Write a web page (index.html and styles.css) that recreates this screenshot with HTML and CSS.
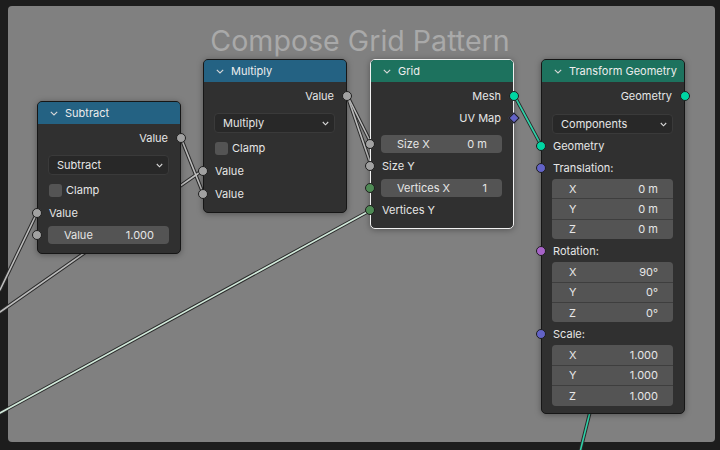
FILE: index.html
```html
<!DOCTYPE html>
<html>
<head>
<meta charset="utf-8">
<link rel="stylesheet" href="styles.css">
</head>
<body>
<div class="stage">
  <div class="frame">
    <div class="frame-title">Compose Grid Pattern</div>
  </div>

  <svg class="wires" width="720" height="450" viewBox="0 0 720 450">
    <g class="w-out">
      <line x1="181" y1="138" x2="203" y2="193"/>
      <line x1="0" y1="312" x2="203" y2="170"/>
      <line x1="37" y1="213" x2="0" y2="290"/>
      <line x1="347" y1="95" x2="371" y2="143"/>
      <line x1="347" y1="95" x2="371" y2="165"/>
      <line x1="371" y1="210" x2="0" y2="413"/>
      <line x1="514" y1="95" x2="541" y2="145"/>
      <line x1="593" y1="400" x2="580" y2="452"/>
    </g>
    <g class="w-gray">
      <line x1="181" y1="138" x2="203" y2="193"/>
      <line x1="0" y1="312" x2="203" y2="170"/>
      <line x1="37" y1="213" x2="0" y2="290"/>
      <line x1="347" y1="95" x2="371" y2="143"/>
      <line x1="347" y1="95" x2="371" y2="165"/>
    </g>
    <g class="w-mint">
      <line x1="371" y1="210" x2="0" y2="413"/>
    </g>
    <g class="w-teal">
      <line x1="514" y1="95" x2="541" y2="145"/>
      <line x1="593" y1="400" x2="580" y2="452"/>
    </g>
  </svg>

  <!-- Subtract -->
  <div class="node n-sub">
    <div class="head head-conv">
      <svg class="chev" width="8" height="5" viewBox="0 0 8 5"><polyline points="0.8,0.8 4,4 7.2,0.8"/></svg>
      <span>Subtract</span>
    </div>
    <div class="body">
      <div class="row out"><span>Value</span><i class="sock s-gray sock-r"></i></div>
      <div class="dd"><span>Subtract</span><svg class="dchev" width="7" height="5" viewBox="0 0 7 5"><polyline points="0.8,1 3.5,3.8 6.2,1"/></svg></div>
      <div class="row"><i class="check"></i><span>Clamp</span></div>
      <div class="row in"><i class="sock s-gray sock-l"></i><span>Value</span></div>
      <div class="row"><i class="sock s-gray sock-l"></i><div class="field"><span>Value</span><span>1.000</span></div></div>
    </div>
  </div>

  <!-- Multiply -->
  <div class="node n-mul">
    <div class="head head-conv">
      <svg class="chev" width="8" height="5" viewBox="0 0 8 5"><polyline points="0.8,0.8 4,4 7.2,0.8"/></svg>
      <span>Multiply</span>
    </div>
    <div class="body">
      <div class="row out"><span>Value</span><i class="sock s-gray sock-r"></i></div>
      <div class="dd"><span>Multiply</span><svg class="dchev" width="7" height="5" viewBox="0 0 7 5"><polyline points="0.8,1 3.5,3.8 6.2,1"/></svg></div>
      <div class="row"><i class="check"></i><span>Clamp</span></div>
      <div class="row in"><i class="sock s-gray sock-l"></i><span>Value</span></div>
      <div class="row in"><i class="sock s-gray sock-l"></i><span>Value</span></div>
    </div>
  </div>

  <!-- Grid -->
  <div class="node n-grid selected">
    <div class="head head-geo">
      <svg class="chev" width="8" height="5" viewBox="0 0 8 5"><polyline points="0.8,0.8 4,4 7.2,0.8"/></svg>
      <span>Grid</span>
    </div>
    <div class="body">
      <div class="row out"><span>Mesh</span><i class="sock s-geo sock-r"></i></div>
      <div class="row out"><span>UV Map</span><i class="diamond"></i></div>
      <div class="row gap-top"><i class="sock s-gray sock-l"></i><div class="field"><span>Size X</span><span>0 m</span></div></div>
      <div class="row in"><i class="sock s-gray sock-l"></i><span>Size Y</span></div>
      <div class="row"><i class="sock s-int sock-l"></i><div class="field"><span>Vertices X</span><span>1</span></div></div>
      <div class="row in"><i class="sock s-int sock-l"></i><span>Vertices Y</span></div>
    </div>
  </div>

  <!-- Transform Geometry -->
  <div class="node n-xf">
    <div class="head head-geo">
      <svg class="chev" width="8" height="5" viewBox="0 0 8 5"><polyline points="0.8,0.8 4,4 7.2,0.8"/></svg>
      <span>Transform Geometry</span>
    </div>
    <div class="body">
      <div class="row out"><span>Geometry</span><i class="sock s-geo sock-r"></i></div>
      <div class="dd dd-xf"><span>Components</span><svg class="dchev" width="7" height="5" viewBox="0 0 7 5"><polyline points="0.8,1 3.5,3.8 6.2,1"/></svg></div>
      <div class="row in"><i class="sock s-geo sock-l"></i><span>Geometry</span></div>
      <div class="row in"><i class="sock s-vec sock-l"></i><span>Translation:</span></div>
      <div class="vec">
        <div class="cell"><span>X</span><span>0 m</span></div>
        <div class="cell"><span>Y</span><span>0 m</span></div>
        <div class="cell"><span>Z</span><span>0 m</span></div>
      </div>
      <div class="row in lbl"><i class="sock s-rot sock-l"></i><span>Rotation:</span></div>
      <div class="vec">
        <div class="cell"><span>X</span><span>90°</span></div>
        <div class="cell"><span>Y</span><span>0°</span></div>
        <div class="cell"><span>Z</span><span>0°</span></div>
      </div>
      <div class="row in lbl"><i class="sock s-vec sock-l"></i><span>Scale:</span></div>
      <div class="vec">
        <div class="cell"><span>X</span><span>1.000</span></div>
        <div class="cell"><span>Y</span><span>1.000</span></div>
        <div class="cell"><span>Z</span><span>1.000</span></div>
      </div>
    </div>
  </div>
</div>
</body>
</html>
```

FILE: styles.css
```css
* { box-sizing: border-box; }
html, body {
  margin: 0;
  padding: 0;
  background: #1d1d1d;
}
body {
  font-family: "Inter", "Noto Sans", "DejaVu Sans", sans-serif;
  font-size: 11px;
  color: #e6e6e6;
}
.stage {
  position: relative;
  width: 720px;
  height: 450px;
  overflow: hidden;
  background: #1d1d1d;
}
.frame {
  position: absolute;
  left: 8px;
  top: 6px;
  width: 707px;
  height: 436px;
  background: #808080;
  border-radius: 4px;
  padding-top: 19px;
}
.frame-title {
  text-align: center;
  font-size: 28.6px;
  line-height: 32px;
  color: #a9a9a9;
  padding-right: 3px;
}
.wires {
  position: absolute;
  left: 0;
  top: 0;
}
.wires line { stroke-linecap: round; }
.w-out line { stroke: #2a2a2a; stroke-width: 3.6; }
.w-gray line { stroke: #bcbcbc; stroke-width: 1.6; }
.w-mint line { stroke: #d2eadb; stroke-width: 1.6; }
.w-teal line { stroke: #2fd1a8; stroke-width: 1.6; }

.node {
  position: absolute;
  width: 144px;
  background: #303030;
  border: 1px solid #161616;
  border-radius: 5px;
  box-shadow: 0 1px 6px rgba(0, 0, 0, 0.35);
}
.node.selected { border-color: #f0f0f0; }
.n-sub { left: 37px; top: 101px; }
.n-mul { left: 203px; top: 59px; }
.n-grid { left: 370px; top: 59px; }
.n-xf { left: 541px; top: 59px; }

.head {
  height: 22px;
  display: flex;
  align-items: center;
  gap: 7px;
  padding-left: 12px;
  border-radius: 4px 4px 0 0;
  color: #ededed;
}
.head-conv { background: #246283; }
.head-geo { background: #1d725e; }
.chev polyline, .dchev polyline {
  fill: none;
  stroke: #d8d8d8;
  stroke-width: 1.1;
}
.body {
  display: flex;
  flex-direction: column;
  padding: 3px 11px 7px 10px;
}
.row {
  position: relative;
  height: 22px;
  display: flex;
  align-items: center;
  padding-left: 1px;
}
.row.out {
  justify-content: flex-end;
  padding-right: 1px;
}
.row.gap-top { margin-top: 4px; }
.row.lbl { margin-top: 1px; }
.n-sub .row.in, .n-mul .row.in { height: 23px; }

.sock {
  position: absolute;
  top: 6px;
  width: 10px;
  height: 10px;
  border-radius: 50%;
  border: 1px solid #1e1e1e;
}
.n-sub .row.in .sock, .n-mul .row.in .sock { top: 6.5px; }
.sock-l { left: -16px; }
.sock-r { right: -17px; }
.s-gray { background: #a1a1a1; }
.s-geo { background: #00d6a3; }
.s-vec { background: #6363c7; }
.s-rot { background: #a663c7; }
.s-int { background: #4f8a55; }
.diamond {
  position: absolute;
  right: -16px;
  top: 7px;
  width: 8px;
  height: 8px;
  background: #6363c7;
  border: 1px solid #1e1e1e;
  transform: rotate(45deg);
}

.dd {
  height: 20px;
  margin: 6px 0 4px;
  background: #282828;
  border: 1px solid #3a3a3a;
  border-radius: 4px;
  display: flex;
  align-items: center;
  justify-content: space-between;
  padding: 0 5px 0 8px;
}
.dd-xf { margin: 7px 0 1px; }
.check {
  width: 13px;
  height: 13px;
  background: #545454;
  border-radius: 3px;
  margin-right: 4px;
}
.field {
  flex: 1;
  height: 18px;
  background: #545454;
  border-radius: 4px;
  display: flex;
  align-items: center;
  justify-content: space-between;
  padding: 0 15px 0 16px;
  margin-left: -1px;
}
.vec {
  display: flex;
  flex-direction: column;
  gap: 1px;
  background: #3e3e3e;
  border-radius: 4px;
  overflow: hidden;
}
.cell {
  height: 19.4px;
  background: #545454;
  display: flex;
  align-items: center;
  justify-content: space-between;
  padding: 0 15px 0 17px;
}
```
